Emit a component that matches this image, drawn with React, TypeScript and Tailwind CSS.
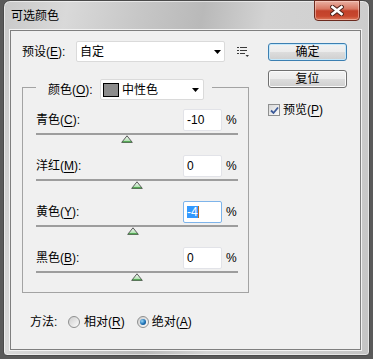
import React from 'react';

const rows = [
  { name: '青色', key: 'C', value: -10 },
  { name: '洋红', key: 'M', value: 0 },
  { name: '黄色', key: 'Y', value: -4, focused: true },
  { name: '黑色', key: 'B', value: 0 },
];

const TRACK_WIDTH = 202;

function Mn({ children }: { children: React.ReactNode }) {
  return <span className="underline underline-offset-[2px]">{children}</span>;
}

function Arrow() {
  return (
    <svg width="7" height="4" viewBox="0 0 7 4">
      <path d="M0 0h7L3.5 4z" fill="#000" />
    </svg>
  );
}

function Thumb() {
  return (
    <svg width="12" height="8" viewBox="0 0 12 8">
      <defs>
        <linearGradient id="thumbFill" x1="0" y1="0" x2="0" y2="1">
          <stop offset="0" stopColor="#ffffff" />
          <stop offset="1" stopColor="#9ad69a" />
        </linearGradient>
      </defs>
      <path d="M6 0.8L11.3 7.4H0.7Z" fill="url(#thumbFill)" stroke="#5a5a5a" strokeWidth="1" />
      <path d="M1.6 6.8H10.4" stroke="#3a9a3a" strokeWidth="1" />
    </svg>
  );
}

function Radio({ checked }: { checked?: boolean }) {
  return (
    <div className="flex h-[12px] w-[12px] items-center justify-center rounded-full border border-[#8e8f8f] bg-[linear-gradient(135deg,#cdcdcd,#fdfdfd)]">
      {checked && (
        <div className="h-[6px] w-[6px] rounded-full bg-[radial-gradient(circle_at_35%_35%,#9ad8f8,#1a6fb5_55%,#0c3b6b)]" />
      )}
    </div>
  );
}

export default function App() {
  return (
    <div className="h-[359px] w-[373px] overflow-hidden bg-[#5a5a5a] font-['Liberation_Sans','Noto_Sans_CJK_SC',sans-serif] text-[12px] leading-[14px] text-black">
      <div className="ml-[3px] flex h-[356px] w-[367px] flex-col rounded-t-[7px] rounded-b-[4px] border border-[#4a4a4a] bg-[linear-gradient(100deg,#c9c9c9_0%,#d9d9d9_15%,#c6c6c6_33%,#b9b9b9_47%,#d3d3d3_62%,#d0d0d0_80%,#c4c4c4_100%)] shadow-[inset_0_0_0_1px_rgba(255,255,255,0.55)]">
        {/* title bar */}
        <div className="flex h-[29px] justify-between">
          <div className="flex items-center pl-[7px]">可选颜色</div>
          <div className="mr-[9px] mt-[-1px] flex h-[21px] w-[46px] items-center justify-center rounded-b-[4px] border border-[#6b2a1e] bg-[linear-gradient(#eab1a3_0%,#d87762_42%,#c2412a_52%,#c8472e_80%,#dc7a5c_100%)] shadow-[inset_0_0_0_1px_rgba(255,220,210,0.5)]">
            <svg width="14" height="11" viewBox="0 0 14 11">
              <path d="M2.5 2L11.5 9M11.5 2L2.5 9" stroke="#4e2219" strokeWidth="4.6" strokeLinecap="square" />
              <path d="M2.5 2L11.5 9M11.5 2L2.5 9" stroke="#ffffff" strokeWidth="2.6" strokeLinecap="square" />
            </svg>
          </div>
        </div>

        {/* dialog body */}
        <div className="ml-[6px] flex h-[320px] w-[351px] border border-[#7f7f7f] bg-[#f0f0f0] shadow-[0_0_0_1px_#f2f2f2]">
          <div className="flex w-[238px] flex-col pl-[11px] pt-[10px]">
            <div className="flex h-[21px] items-center">
              <span className="w-[54px]">预设(<Mn>E</Mn>):</span>
              <div className="flex h-[21px] w-[149px] items-center justify-between rounded-[2px] border border-[#dadada] bg-white pl-[3px] pr-[3px]">
                <span>自定</span>
                <Arrow />
              </div>
              <svg className="ml-[12px]" width="12" height="12" viewBox="0 0 12 12" fill="#3a3a3a">
                <rect x="0" y="1" width="2" height="1" />
                <rect x="3" y="1" width="7" height="1" />
                <rect x="0" y="4" width="2" height="1" />
                <rect x="3" y="4" width="7" height="1" />
                <rect x="0" y="7" width="2" height="1" />
                <rect x="3" y="7" width="5" height="1" />
                <path d="M8.5 9h3.5l-1.75 2z" />
              </svg>
            </div>

            <fieldset className="mt-[12px] w-[227px] border border-[#a3a3a3] pb-[11px] pl-[13px] pr-[10px] pt-[9px]">
              <legend className="pl-[12px] pr-[8px] pt-[5px]">
                <div className="flex items-center">
                  <span className="w-[52px]">颜色(<Mn>O</Mn>):</span>
                  <div className="flex h-[21px] w-[104px] items-center rounded-[2px] border border-[#dadada] bg-white pl-[2px] pr-[4px]">
                    <div className="h-[14px] w-[16px] border border-black bg-[#8c8c8c]" />
                    <span className="ml-[3px] flex-1">中性色</span>
                    <Arrow />
                  </div>
                </div>
              </legend>

              {rows.map((r, i) => {
                const center = ((r.value + 100) / 200) * TRACK_WIDTH;
                return (
                  <div key={r.key} className={i ? 'mt-[12px]' : ''}>
                    <div className="flex h-[22px] items-center">
                      <span className="flex-1">
                        {r.name}(<Mn>{r.key}</Mn>):
                      </span>
                      <div
                        className={`flex h-[22px] w-[39px] items-center rounded-[2px] border bg-white pl-[3px] ${
                          r.focused ? 'border-[#7eb4ea]' : 'border-[#e2e3e8]'
                        }`}
                      >
                        {r.focused ? (
                          <>
                            <span className="bg-[#3399ff] leading-[12px] text-white">{r.value}</span>
                            <span className="h-[12px] w-px bg-[#b86a20]" />
                          </>
                        ) : (
                          <span>{r.value}</span>
                        )}
                      </div>
                      <span className="ml-[4px] w-[12px]">%</span>
                    </div>
                    <div className="mt-[2px] h-[2px] bg-[#9d9d9d]" />
                    <div className="h-[8px]">
                      <div className="w-[12px]" style={{ marginLeft: center - 6 }}>
                        <Thumb />
                      </div>
                    </div>
                  </div>
                );
              })}
            </fieldset>

            <div className="ml-[8px] mt-[21px] flex h-[16px] items-center">
              <span className="w-[38px]">方法:</span>
              <Radio />
              <span className="ml-[4px]">相对(<Mn>R</Mn>)</span>
              <div className="ml-[12px]">
                <Radio checked />
              </div>
              <span className="ml-[3px]">绝对(<Mn>A</Mn>)</span>
            </div>
          </div>

          <div className="ml-[19px] flex flex-col pt-[12px]">
            <div className="flex h-[18px] w-[79px] items-center justify-center rounded-[3px] border border-[#3c7fb1] bg-[linear-gradient(#f2f2f2_0%,#ebebeb_50%,#dddddd_50%,#cfcfcf_100%)] shadow-[inset_0_0_0_1px_#c4e8fb]">
              确定
            </div>
            <div className="mt-[9px] flex h-[18px] w-[79px] items-center justify-center rounded-[3px] border border-[#707070] bg-[linear-gradient(#f2f2f2_0%,#ebebeb_50%,#dddddd_50%,#cfcfcf_100%)] shadow-[inset_0_0_0_1px_#fbfbfb]">
              复位
            </div>
            <div className="mt-[16px] flex h-[12px] items-center">
              <div className="flex h-[12px] w-[12px] items-center justify-center border border-[#8e8f8f] bg-[linear-gradient(135deg,#d8d8d8,#fbfbfb)]">
                <svg width="9" height="9" viewBox="0 0 9 9">
                  <path d="M1 4.5L3.5 7L8 1.5" fill="none" stroke="#3c5a99" strokeWidth="1.8" />
                </svg>
              </div>
              <span className="ml-[3px]">
                预览(<Mn>P</Mn>)
              </span>
            </div>
          </div>
        </div>
      </div>
    </div>
  );
}
